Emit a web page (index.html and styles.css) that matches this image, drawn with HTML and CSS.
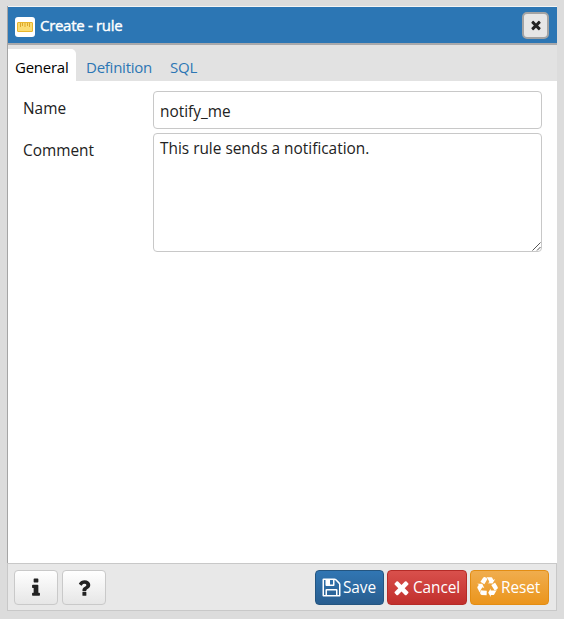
FILE: index.html
```html
<!DOCTYPE html>
<html lang="en">
<head>
<meta charset="utf-8">
<title>Create - rule</title>
<link rel="stylesheet" href="styles.css">
</head>
<body>
<main class="dialog">
  <header class="titlebar">
    <span class="rule-icon"><svg width="16" height="10" viewBox="0 0 16 10"><rect x=".5" y=".5" width="15" height="9" rx=".5" fill="#fbdc72" stroke="#e9b62c"/><path d="M3.5 1v4M5.5 1v3M8 1v4M10.5 1v3M12.5 1v4" stroke="#dca72b" fill="none"/></svg></span>
    <h1 class="title">Create - rule</h1>
    <button class="close" aria-label="Close"><svg width="14" height="14" viewBox="0 0 1792 1792"><path d="M1490 1322q0 40-28 68l-136 136q-28 28-68 28t-68-28l-294-294-294 294q-28 28-68 28t-68-28l-136-136q-28-28-28-68t28-68l294-294-294-294q-28-28-28-68t28-68l136-136q28-28 68-28t68 28l294 294 294-294q28-28 68-28t68 28l136 136q28 28 28 68t-28 68l-294 294 294 294q28 28 28 68z"/></svg></button>
  </header>
  <nav class="tabs">
    <a class="tab active">General</a>
    <a class="tab definition">Definition</a>
    <a class="tab sql">SQL</a>
  </nav>
  <section class="content">
    <div class="row">
      <label class="label" for="name">Name</label>
      <input class="field name" id="name" value="notify_me">
    </div>
    <div class="row">
      <label class="label" for="comment">Comment</label>
      <div class="comment-wrap">
        <textarea class="field comment" id="comment" spellcheck="false">This rule sends a notification.</textarea>
        <svg class="grip" width="9" height="9" viewBox="0 0 9 9"><path d="M.5 8.5l8-8M5 8.5L8.5 5" stroke="#555" fill="none"/></svg>
      </div>
    </div>
  </section>
  <footer class="footer">
    <button class="btn plain" aria-label="Info"><svg width="22" height="22" viewBox="0 0 1792 1792"><path d="M1216 1344v128q0 26-19 45t-45 19h-512q-26 0-45-19t-19-45v-128q0-26 19-45t45-19h64v-384h-64q-26 0-45-19t-19-45v-128q0-26 19-45t45-19h384q26 0 45 19t19 45v576h64q26 0 45 19t19 45zm-128-1152v192q0 26-19 45t-45 19h-256q-26 0-45-19t-19-45v-192q0-26 19-45t45-19h256q26 0 45 19t19 45z"/></svg></button>
    <button class="btn plain" aria-label="Help"><svg width="22" height="22" viewBox="0 0 1792 1792"><path d="M1088 1256v240q0 16-12 28t-28 12h-240q-16 0-28-12t-12-28v-240q0-16 12-28t28-12h240q16 0 28 12t12 28zm316-600q0 54-15.500 101t-35 76.500-55 59.500-57.500 43.500-61 35.500q-41 23-68.500 65t-27.500 67q0 17-12 32.500t-28 15.500h-240q-15 0-25.500-18.500t-10.500-37.500v-45q0-83 65-156.500t143-108.500q59-27 84-56t25-76q0-42-46.500-74t-107.500-32q-65 0-108 29-35 25-107 115-13 16-31 16-12 0-25-8l-164-125q-13-10-15.500-25t5.500-28q160-266 464-266 80 0 161 31t146 83 106 127.500 41 158.500z"/></svg></button>
    <button class="btn save"><svg width="21" height="21" viewBox="0 0 1792 1792"><path d="M512 1536h768v-384h-768v384zm896 0h128v-896q0-14-10-38.500t-20-34.500l-281-281q-10-10-34-20t-39-10v416q0 40-28 68t-68 28h-576q-40 0-68-28t-28-68v-416h-128v1280h128v-416q0-40 28-68t68-28h832q40 0 68 28t28 68v416zm-384-928v-320q0-13-9.500-22.500t-22.500-9.500h-192q-13 0-22.500 9.500t-9.500 22.500v320q0 13 9.500 22.500t22.500 9.500h192q13 0 22.500-9.500t9.500-22.500zm640 32v928q0 40-28 68t-68 28h-1344q-40 0-68-28t-28-68v-1344q0-40 28-68t68-28h928q40 0 88 20t76 48l280 280q28 28 48 76t20 88z"/></svg><span>Save</span></button>
    <button class="btn cancel"><svg width="21" height="21" viewBox="0 0 1792 1792"><path d="M1490 1322q0 40-28 68l-136 136q-28 28-68 28t-68-28l-294-294-294 294q-28 28-68 28t-68-28l-136-136q-28-28-28-68t28-68l294-294-294-294q-28-28-28-68t28-68l136-136q28-28 68-28t68 28l294 294 294-294q28-28 68-28t68 28l136 136q28 28 28 68t-28 68l-294 294 294 294q28 28 28 68z"/></svg><span>Cancel</span></button>
    <button class="btn reset"><svg width="21" height="21" viewBox="0 0 1792 1792"><path d="M836 1169l-15 368-2 22-420-29q-36-3-67-31.500t-47-65.500q-11-27-14.500-55t4-65 12-55 21.500-64 19-53q78 12 509 28zm-387-586l180 379-147-92q-63 72-111.500 144.500t-72.500 125-39.500 94.500-18.500 63l-4 21-190-357q-17-26-18-56t6-47l8-18q35-63 114-188l-140-86zm1231 517l-188 359q-12 29-36.500 46.500t-43.500 20.500l-18 4q-71 7-219 12l8 164-230-367 211-362 7 173q170 16 283 5t170-33zm-785-924q-47 63-265 435l-317-187-19-12 225-356q20-31 60-45t80-10q24 2 48.500 12t42 21 41.500 33 36 34.500 36 39.500 32 35zm655 307l212 363q18 37 12.500 76t-27.500 74q-13 20-33 37t-38 28-48.500 22-47 16-51.500 14-46 12q-34-72-265-436l313-195zm-143-226l142-83-220 373-419-20 151-86q-34-89-75-166t-75.500-123.500-64.500-80-47-46.500l-17-13 405 1q31-3 58 10.500t39 28.500l11 15q39 61 112 190z"/></svg><span>Reset</span></button>
  </footer>
</main>
</body>
</html>
```
FILE: styles.css
```css
* { box-sizing: border-box; }
html, body { height: 100%; }
body {
  margin: 0;
  padding: 6px 7px 8px;
  overflow: hidden;
  background: #dcdcdc;
  color: #222;
  font: 15.4px/20px "Open Sans", sans-serif;
}
button, input, textarea { font: inherit; color: inherit; }
svg { display: block; flex: none; fill: currentColor; }
.dialog {
  display: flex;
  flex-direction: column;
  height: 605px;
  border-left: 1px solid #a5a5a5;
  background: #fff;
}
.titlebar {
  display: flex;
  align-items: center;
  height: 39px;
  padding: 0 7px;
  border-top: 1px solid #f4f4f4;
  border-bottom: 2px solid #a9a9ab;
  background: #2c76b4;
  color: #fff;
}
.rule-icon {
  display: flex;
  align-items: center;
  justify-content: center;
  width: 20px;
  height: 20px;
  margin: 3px 5px 0 0;
  border-radius: 3px;
  background: #fff;
}
.title {
  margin: 0;
  font-size: 15px;
  font-weight: 400;
  letter-spacing: -.3px;
  -webkit-text-stroke: .4px #fff;
}
.close {
  display: flex;
  align-items: center;
  justify-content: center;
  width: 27px;
  height: 27px;
  margin: 0 1px 0 auto;
  padding: 0;
  border: 2px solid #a3a3a3;
  border-radius: 5px;
  background: #e6e6e6;
  color: #222;
}
.tabs {
  display: flex;
  flex: none;
  height: 36px;
  padding-top: 4px;
  background: #e2e2e2;
  color: #2c76b4;
  font-size: 15px;
  letter-spacing: -.25px;
}
.tab { padding: 8px 0; }
.tab.active {
  width: 68px;
  padding-left: 7px;
  border-radius: 0 5px 0 0;
  background: #fff;
  color: #000;
}
.definition { margin-left: 10px; width: 84px; }
.content {
  display: flex;
  flex: 1;
  flex-direction: column;
  gap: 4px;
  padding: 10px 15px 0;
}
.row { display: flex; }
.label { flex: none; width: 130px; padding-top: 8px; }
.field {
  display: block;
  width: 389px;
  border: 1px solid #c8c8c8;
  border-radius: 4px;
  background: #fff;
  outline: none;
}
.name { height: 38px; padding: 3px 6px 0; }
.comment-wrap { position: relative; }
.comment { height: 119px; padding: 5px 6px; resize: none; }
.grip { position: absolute; right: 1px; bottom: 1px; }
.footer {
  display: flex;
  flex: none;
  gap: 3px;
  height: 48px;
  margin-left: -1px;
  padding: 6px 7px;
  border: 1px solid #c8c8c8;
  background: #e8e8e8;
}
.btn {
  display: flex;
  align-items: center;
  height: 35px;
  padding: 0 0 0 5px;
  border: 1px solid;
  border-radius: 4px;
  color: #fff;
}
.plain {
  justify-content: center;
  width: 44px;
  margin: 0 1px 0 -1px;
  padding: 0;
  border-color: #c9c9c9;
  background: linear-gradient(#fff, #e6e6e6);
  color: #222;
}
.plain + .plain { margin-left: 0; }
.save {
  width: 69px;
  margin-left: auto;
  border-color: #245580;
  background: linear-gradient(#3176b3, #285d8f);
}
.cancel { width: 80px; padding-left: 3px; border-color: #b52b27; background: linear-gradient(#d9504c, #c12f2c); }
.reset { width: 79px; padding-left: 6px; border-color: #e38d13; background: linear-gradient(#f0ad4e, #eb951c); }
.btn span { margin: 1px 0 0 1px; letter-spacing: -.1px; }
.reset span { margin-left: 3px; }
```
